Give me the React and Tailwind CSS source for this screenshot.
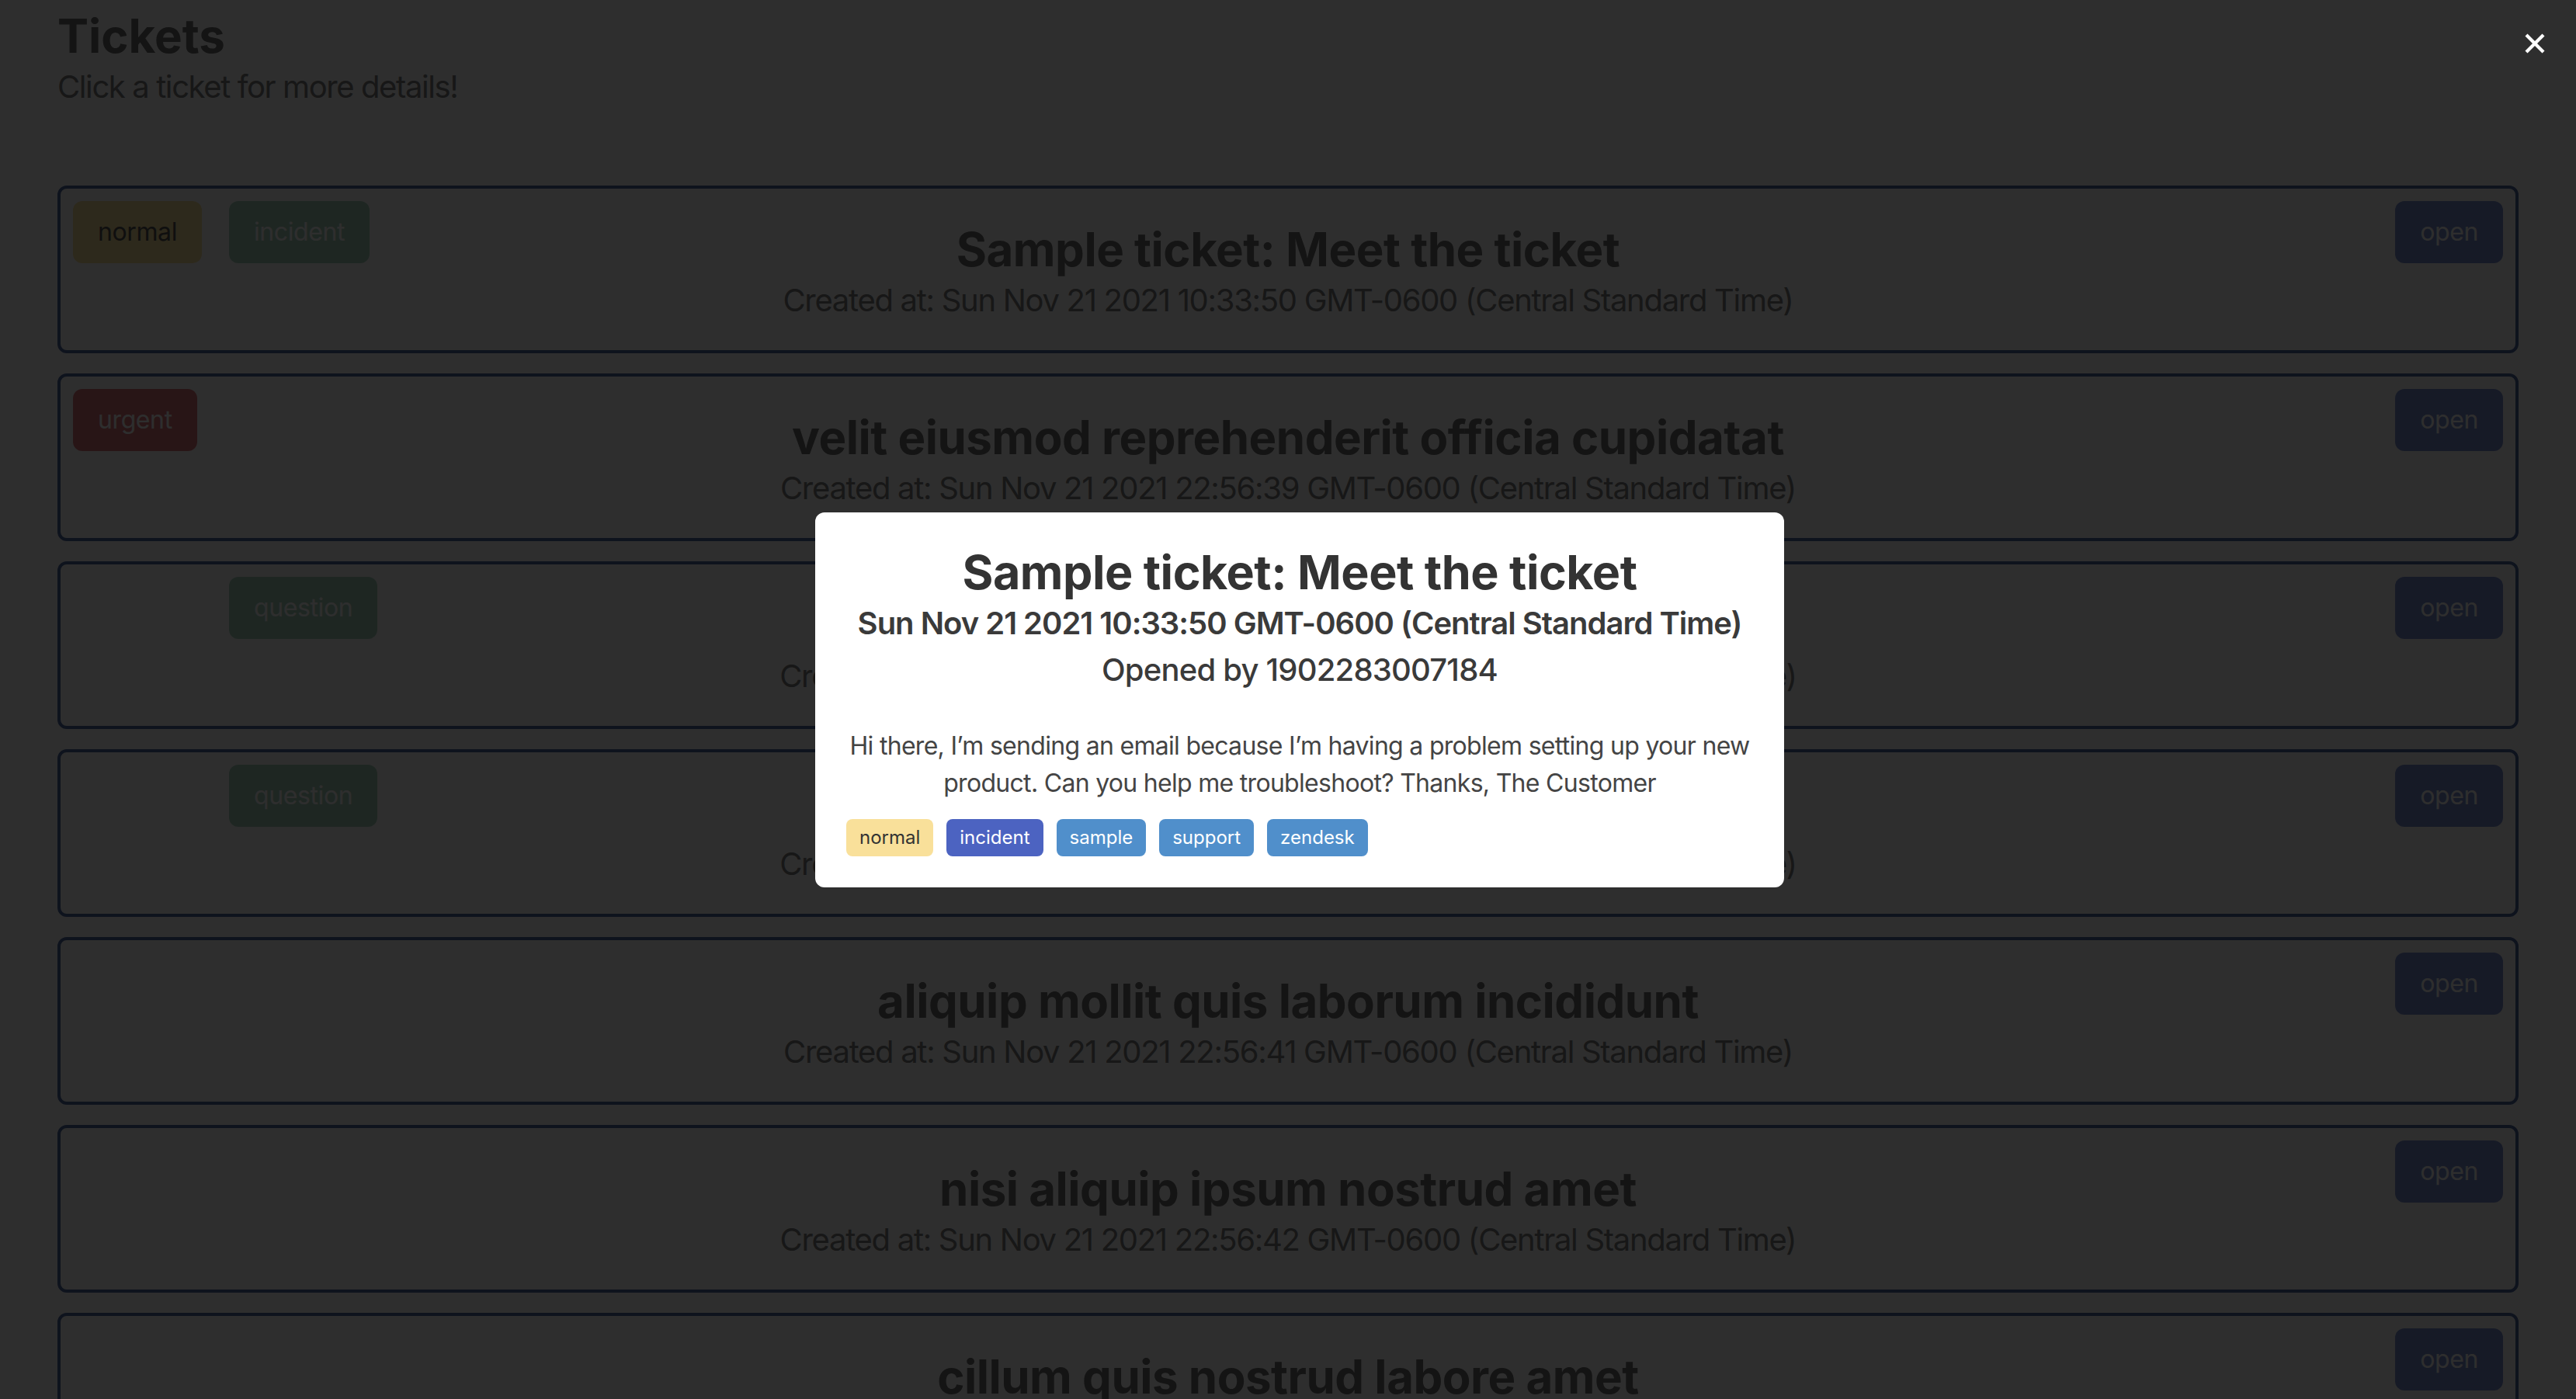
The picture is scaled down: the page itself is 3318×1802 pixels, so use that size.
import React from "react";

const CREATED = "Sun Nov 21 2021";
const TZ = "GMT-0600 (Central Standard Time)";

const TICKETS = [
  { id: 1, subject: "Sample ticket: Meet the ticket", time: "10:33:50", priority: "normal", type: "incident" },
  { id: 2, subject: "velit eiusmod reprehenderit officia cupidatat", time: "22:56:39", priority: "urgent" },
  { id: 3, subject: "excepteur laborum ex occaecat", time: "22:56:40", type: "question" },
  { id: 4, subject: "ad sunt qui aute ullamco", time: "22:56:40", type: "question" },
  { id: 5, subject: "aliquip mollit quis laborum incididunt", time: "22:56:41" },
  { id: 6, subject: "nisi aliquip ipsum nostrud amet", time: "22:56:42" },
  { id: 7, subject: "cillum quis nostrud labore amet", time: "22:56:43" },
  { id: 8, subject: "officia exercitation do sint", time: "22:56:43" },
];

const PRIORITY_STYLES = {
  normal: "bg-[#f9e09a] text-[#555]",
  urgent: "bg-[#de757a] text-white",
};

const TYPE_STYLES = {
  incident: "bg-[#a7d3bd] text-white",
  question: "bg-[#a7d3bd] text-white",
};

const MODAL_TAGS = [
  { label: "normal", className: "bg-[#f9e09a] text-[#333]" },
  { label: "incident", className: "bg-[#4c63c1] text-white" },
  { label: "sample", className: "bg-[#508fcb] text-white" },
  { label: "support", className: "bg-[#508fcb] text-white" },
  { label: "zendesk", className: "bg-[#508fcb] text-white" },
];

function Badge({ label, className }) {
  return (
    <span
      className={`inline-flex h-[80px] items-center rounded-[12px] px-8 text-[32px] tracking-[-0.4px] ${className}`}
    >
      {label}
    </span>
  );
}

function TicketCard({ ticket }) {
  return (
    <div className="grid grid-cols-[1fr_auto_1fr] rounded-[12px] border-4 border-[#4e6aa1] p-4">
      <div className="flex items-start">
        <div className="w-[201px] shrink-0">
          {ticket.priority ? (
            <Badge label={ticket.priority} className={PRIORITY_STYLES[ticket.priority]} />
          ) : null}
        </div>
        {ticket.type ? <Badge label={ticket.type} className={TYPE_STYLES[ticket.type]} /> : null}
      </div>

      <div className="pb-[18px] pt-[26px] text-center">
        <h2 className="text-[60px] font-bold leading-[72px] tracking-[-0.5px] text-[#6e6e6e]">
          {ticket.subject}
        </h2>
        <p className="text-[40px] leading-[60px] tracking-[-1.3px] text-[#808080]">
          Created at: {CREATED} {ticket.time} {TZ}
        </p>
      </div>

      <div className="flex items-start justify-end">
        <button
          type="button"
          className="h-[80px] rounded-[12px] bg-[#7a90d3] px-8 text-[32px] tracking-[-0.4px] text-white"
        >
          open
        </button>
      </div>
    </div>
  );
}

function TicketModal() {
  return (
    <div className="fixed inset-0 flex items-center justify-center pl-[30px]">
      <div className="w-[1248px] rounded-[12px] bg-white px-10 pb-10 pt-[41px]">
        <div className="text-center">
          <h2 className="text-[61px] font-bold leading-[72px] tracking-[-0.5px] text-[#333]">
            Sample ticket: Meet the ticket
          </h2>
          <p className="whitespace-nowrap text-[40px] font-semibold leading-[60px] tracking-[-1px] text-[#3a3a3a]">
            {CREATED} 10:33:50 {TZ}
          </p>
          <p className="text-[40px] font-medium leading-[60px] tracking-[-0.8px] text-[#3a3a3a]">
            Opened by 1902283007184
          </p>
          <p className="mt-[44px] text-[32px] leading-[48px] tracking-[-0.7px] text-[#444]">
            Hi there, I’m sending an email because I’m having a problem setting up your new product.
            Can you help me troubleshoot? Thanks, The Customer
          </p>
        </div>
        <div className="mt-[22px] flex gap-[17px]">
          {MODAL_TAGS.map((tag) => (
            <span
              key={tag.label}
              className={`inline-flex h-[48px] items-center rounded-[8px] px-[17px] text-[24px] ${tag.className}`}
            >
              {tag.label}
            </span>
          ))}
        </div>
      </div>
    </div>
  );
}

export default function App() {
  return (
    <div
      className="relative h-screen overflow-hidden bg-white"
      style={{ fontFamily: "Inter, 'Noto Sans', sans-serif" }}
    >
      <div className="px-[74px] pt-[10px]">
        <h1 className="text-[60px] font-bold leading-[72px] text-[#6e6e6e]">Tickets</h1>
        <p className="text-[40px] leading-[60px] tracking-[-1.4px] text-[#808080]">
          Click a ticket for more details!
        </p>

        <div className="mt-[97px] flex flex-col gap-[26px]">
          {TICKETS.map((ticket) => (
            <TicketCard key={ticket.id} ticket={ticket} />
          ))}
        </div>
      </div>

      {/* overlay */}
      <div className="fixed inset-0 bg-black/[0.82]" />

      <button
        type="button"
        className="fixed right-[27px] top-[30px] flex h-[52px] w-[52px] items-center justify-center text-white"
      >
        <svg viewBox="0 0 26 26" className="h-[26px] w-[26px]" stroke="currentColor" strokeWidth="4.2">
          <line x1="2" y1="2" x2="24" y2="24" />
          <line x1="24" y1="2" x2="2" y2="24" />
        </svg>
      </button>

      <TicketModal />
    </div>
  );
}
